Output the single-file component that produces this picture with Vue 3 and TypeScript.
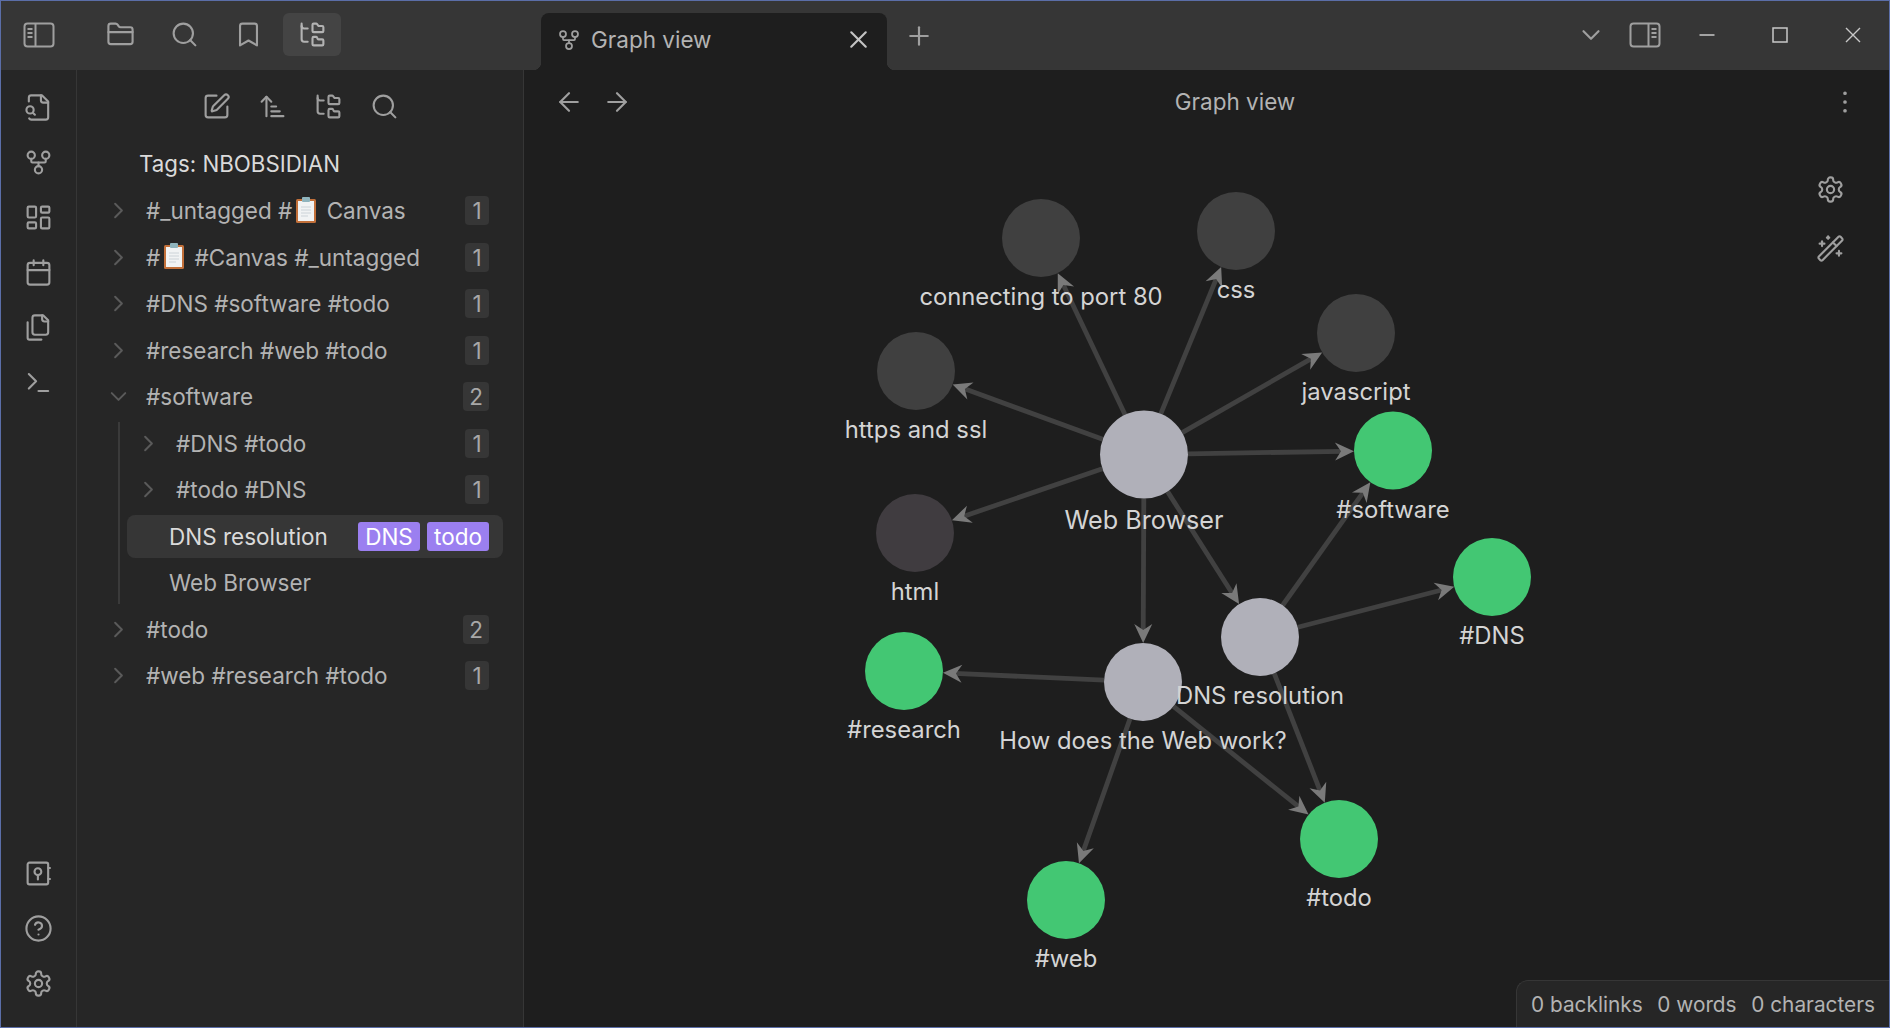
<script setup lang="ts">
import { h } from "vue";

// helpers so circles and rects can live in the same path list as everything else
const c = (cx: number, cy: number, r: number) =>
  `M${cx - r} ${cy}a${r} ${r} 0 1 0 ${2 * r} 0a${r} ${r} 0 1 0 ${-2 * r} 0`;
const rr = (x: number, y: number, w: number, ht: number, r: number) =>
  `M${x + r} ${y}h${w - 2 * r}a${r} ${r} 0 0 1 ${r} ${r}v${ht - 2 * r}a${r} ${r} 0 0 1 ${-r} ${r}h${-(w - 2 * r)}a${r} ${r} 0 0 1 ${-r} ${-r}v${-(ht - 2 * r)}a${r} ${r} 0 0 1 ${r} ${-r}z`;

const icons: Record<string, string[]> = {
  folder: [
    "M20 20a2 2 0 0 0 2-2V8a2 2 0 0 0-2-2h-7.9a2 2 0 0 1-1.69-.9L9.6 3.9A2 2 0 0 0 7.93 3H4a2 2 0 0 0-2 2v13a2 2 0 0 0 2 2Z",
    "M2 10h20",
  ],
  search: [c(11, 11, 8), "M21 21l-4.35-4.35"],
  bookmark: ["m19 21-7-4-7 4V5a2 2 0 0 1 2-2h10a2 2 0 0 1 2 2v16z"],
  tree: [
    "M20 10a1 1 0 0 0 1-1V6a1 1 0 0 0-1-1h-2.5a1 1 0 0 1-.8-.4l-.9-1.2A1 1 0 0 0 15 3h-2a1 1 0 0 0-1 1v5a1 1 0 0 0 1 1Z",
    "M20 21a1 1 0 0 0 1-1v-3a1 1 0 0 0-1-1h-2.9a1 1 0 0 1-.88-.55l-.42-.85a1 1 0 0 0-.92-.6H13a1 1 0 0 0-1 1v5a1 1 0 0 0 1 1Z",
    "M3 5a2 2 0 0 0 2 2h3",
    "M3 3v13a2 2 0 0 0 2 2h3",
  ],
  edit: [
    "M12 3H5a2 2 0 0 0-2 2v14a2 2 0 0 0 2 2h14a2 2 0 0 0 2-2v-7",
    "M18.375 2.625a1 1 0 0 1 3 3l-9.013 9.014a2 2 0 0 1-.853.505l-2.873.84a.5.5 0 0 1-.62-.62l.84-2.873a2 2 0 0 1 .506-.852z",
  ],
  sort: ["m3 8 4-4 4 4", "M7 4v16", "M11 12h4", "M11 16h7", "M11 20h10"],
  fileSearch: [
    "M14 2v4a2 2 0 0 0 2 2h4",
    "M4.268 21a2 2 0 0 0 1.727 1H18a2 2 0 0 0 2-2V7l-5-5H6a2 2 0 0 0-2 2v3",
    "m9 18-1.5-1.5",
    c(5, 14, 3),
  ],
  fork: [
    c(12, 18, 3),
    c(6, 6, 3),
    c(18, 6, 3),
    "M18 9v2c0 .6-.4 1-1 1H7c-.6 0-1-.4-1-1V9",
    "M12 12v3",
  ],
  dashboard: [rr(3, 3, 7, 9, 1), rr(14, 3, 7, 5, 1), rr(14, 12, 7, 9, 1), rr(3, 16, 7, 5, 1)],
  calendar: ["M8 2v4", "M16 2v4", rr(3, 4, 18, 18, 2), "M3 10h18"],
  files: [
    "M20 7h-3a2 2 0 0 1-2-2V2",
    "M9 18a2 2 0 0 1-2-2V4a2 2 0 0 1 2-2h7l4 4v10a2 2 0 0 1-2 2Z",
    "M3 7.6v12.8A1.6 1.6 0 0 0 4.6 22h9.8",
  ],
  terminal: ["m4 17 6-6-6-6", "M12 19h8"],
  vault: [rr(3, 3, 17, 18, 1.5), c(11.5, 10.5, 2.8), "M11.5 13.3v3.7", "M20 7.5h1.5", "M20 16.5h1.5"],
  help: [c(12, 12, 10), "M9.09 9a3 3 0 0 1 5.83 1c0 2-3 3-3 3", "M12 17h.01"],
  gear: [
    "M12.22 2h-.44a2 2 0 0 0-2 2v.18a2 2 0 0 1-1 1.73l-.43.25a2 2 0 0 1-2 0l-.15-.08a2 2 0 0 0-2.73.73l-.22.38a2 2 0 0 0 .73 2.73l.15.1a2 2 0 0 1 1 1.72v.51a2 2 0 0 1-1 1.74l-.15.09a2 2 0 0 0-.73 2.73l.22.38a2 2 0 0 0 2.73.73l.15-.08a2 2 0 0 1 2 0l.43.25a2 2 0 0 1 1 1.73V20a2 2 0 0 0 2 2h.44a2 2 0 0 0 2-2v-.18a2 2 0 0 1 1-1.73l.43-.25a2 2 0 0 1 2 0l.15.08a2 2 0 0 0 2.73-.73l.22-.39a2 2 0 0 0-.73-2.73l-.15-.08a2 2 0 0 1-1-1.74v-.5a2 2 0 0 1 1-1.74l.15-.09a2 2 0 0 0 .73-2.73l-.22-.38a2 2 0 0 0-2.73-.73l-.15.08a2 2 0 0 1-2 0l-.43-.25a2 2 0 0 1-1-1.73V4a2 2 0 0 0-2-2z",
    c(12, 12, 3),
  ],
  wand: [
    "m21.64 3.64-1.28-1.28a1.21 1.21 0 0 0-1.72 0L2.36 18.64a1.21 1.21 0 0 0 0 1.72l1.28 1.28a1.2 1.2 0 0 0 1.72 0L21.64 5.36a1.2 1.2 0 0 0 0-1.72",
    "m14 7 3 3",
    "M5 6v4",
    "M19 14v4",
    "M10 2v2",
    "M7 8H3",
    "M21 16h-4",
    "M11 3H9",
  ],
  chevronRight: ["m9 18 6-6-6-6"],
  chevronDown: ["m6 9 6 6 6-6"],
  x: ["M18 6 6 18", "m6 6 12 12"],
  plus: ["M5 12h14", "M12 5v14"],
  arrowLeft: ["m12 19-7-7 7-7", "M19 12H5"],
  arrowRight: ["M5 12h14", "m12 5 7 7-7 7"],
  more: [c(12, 5, 0.6), c(12, 12, 0.6), c(12, 19, 0.6)],
};

const Icon = (props: { name: string; size?: number }) => {
  const s = props.size ?? 29;
  return h(
    "svg",
    {
      width: s,
      height: s,
      viewBox: "0 0 24 24",
      fill: "none",
      stroke: "currentColor",
      "stroke-width": 1.75,
      "stroke-linecap": "round",
      "stroke-linejoin": "round",
    },
    icons[props.name].map((d) => h("path", { d }))
  );
};
Icon.props = ["name", "size"];

const ribbonTop = ["fileSearch", "fork", "dashboard", "calendar", "files", "terminal"];
const ribbonBottom = ["vault", "help", "gear"];
const tabButtons = ["folder", "search", "bookmark", "tree"];
const navButtons = ["edit", "sort", "tree", "search"];

const afterTree = [
  { label: "#todo", count: 2 },
  { label: "#web #research #todo", count: 1 },
];
const beforeTree = [
  { label: "#DNS #software #todo", count: 1 },
  { label: "#research #web #todo", count: 1 },
];

// graph canvas, in window coordinates
type GNode = { id: string; x: number; y: number; r: number; fill: string };
const gray = "#b0b0b9";
const dim = "#404040";
const green = "#43c773";
const nodes: GNode[] = [
  { id: "connecting to port 80", x: 1041, y: 238, r: 39, fill: dim },
  { id: "css", x: 1236, y: 231, r: 39, fill: dim },
  { id: "javascript", x: 1356, y: 333, r: 39, fill: dim },
  { id: "https and ssl", x: 916, y: 371, r: 39, fill: dim },
  { id: "Web Browser", x: 1144, y: 454.5, r: 44, fill: gray },
  { id: "#software", x: 1393, y: 450.5, r: 39, fill: green },
  { id: "html", x: 915, y: 533, r: 39, fill: "#403c40" },
  { id: "#DNS", x: 1492, y: 577, r: 39, fill: green },
  { id: "DNS resolution", x: 1260, y: 637, r: 39, fill: gray },
  { id: "How does the Web work?", x: 1143, y: 682, r: 39, fill: gray },
  { id: "#research", x: 904, y: 671, r: 39, fill: green },
  { id: "#todo", x: 1339, y: 839, r: 39, fill: green },
  { id: "#web", x: 1066, y: 900, r: 39, fill: green },
];
const byId = (id: string) => nodes.find((n) => n.id === id) as GNode;
const links: [string, string][] = [
  ["Web Browser", "connecting to port 80"],
  ["Web Browser", "css"],
  ["Web Browser", "javascript"],
  ["Web Browser", "https and ssl"],
  ["Web Browser", "html"],
  ["Web Browser", "#software"],
  ["Web Browser", "DNS resolution"],
  ["Web Browser", "How does the Web work?"],
  ["DNS resolution", "#software"],
  ["DNS resolution", "#DNS"],
  ["DNS resolution", "#todo"],
  ["How does the Web work?", "#research"],
  ["How does the Web work?", "#web"],
  ["How does the Web work?", "#todo"],
];
const edges = links.map(([from, to]) => {
  const a = byId(from);
  const b = byId(to);
  const len = Math.hypot(b.x - a.x, b.y - a.y);
  const ux = (b.x - a.x) / len;
  const uy = (b.y - a.y) / len;
  const tipX = b.x - ux * b.r;
  const tipY = b.y - uy * b.r;
  const at = (back: number, side: number) =>
    `${tipX - ux * back - uy * side},${tipY - uy * back + ux * side}`;
  return {
    key: from + to,
    x1: a.x + ux * a.r,
    y1: a.y + uy * a.r,
    x2: tipX - ux * 12,
    y2: tipY - uy * 12,
    head: [at(0, 0), at(19, 9), at(13, 0), at(19, -9)].join(" "),
  };
});
</script>

<template>
  <div class="window">
    <header class="titlebar">
      <div class="tb-left">
        <button class="tb-btn toggle">
          <svg width="32" height="26" viewBox="0 0 32 26" fill="none" stroke="currentColor" stroke-width="2">
            <rect x="1.5" y="1.5" width="29" height="23" rx="3" />
            <path d="M12.5 2v22" />
            <path d="M4.5 7h5M4.5 11h5M4.5 15h5" />
          </svg>
        </button>
        <button v-for="b in tabButtons" :key="b" class="tb-btn" :class="{ active: b === 'tree' }">
          <Icon :name="b" />
        </button>
      </div>
      <div class="tab">
        <Icon name="fork" :size="24" />
        <span class="tab-title">Graph view</span>
        <span class="tab-close"><Icon name="x" :size="29" /></span>
      </div>
      <button class="new-tab"><Icon name="plus" :size="30" /></button>
      <div class="tb-right">
        <button class="ctl list"><Icon name="chevronDown" :size="30" /></button>
        <button class="ctl side">
          <svg width="32" height="26" viewBox="0 0 32 26" fill="none" stroke="currentColor" stroke-width="2">
            <rect x="1.5" y="1.5" width="29" height="23" rx="3" />
            <path d="M19.5 2v22" />
            <path d="M22.5 7h5M22.5 11h5M22.5 15h5" />
          </svg>
        </button>
        <button class="ctl win">
          <svg width="16" height="16" viewBox="0 0 16 16" fill="none" stroke="currentColor" stroke-width="1.5"><path d="M0.5 8h15" /></svg>
        </button>
        <button class="ctl win">
          <svg width="16" height="16" viewBox="0 0 16 16" fill="none" stroke="currentColor" stroke-width="1.5"><rect x="1" y="1" width="14" height="14" /></svg>
        </button>
        <button class="ctl win">
          <svg width="16" height="16" viewBox="0 0 16 16" fill="none" stroke="currentColor" stroke-width="1.4"><path d="M1 1l14 14M15 1L1 15" /></svg>
        </button>
      </div>
    </header>

    <div class="body">
      <aside class="ribbon">
        <div class="ribbon-group">
          <span v-for="r in ribbonTop" :key="r" class="ribbon-icon"><Icon :name="r" /></span>
        </div>
        <div class="ribbon-group">
          <span v-for="r in ribbonBottom" :key="r" class="ribbon-icon"><Icon :name="r" /></span>
        </div>
      </aside>

      <aside class="sidebar">
        <nav class="side-nav">
          <button v-for="n in navButtons" :key="n" class="nav-btn"><Icon :name="n" /></button>
        </nav>
        <div class="pane-title">Tags: NBOBSIDIAN</div>
        <div class="tree">
          <div class="row">
            <span class="chev"><Icon name="chevronRight" :size="27" /></span>
            <span class="label">#_untagged #<svg class="clip" width="22" height="26" viewBox="0 0 22 26">
                <rect x="1" y="2" width="20" height="24" rx="1.5" fill="#c2703a" />
                <rect x="3" y="4" width="16" height="20" fill="#f1f3f4" />
                <path d="M6 10h10M6 13h10M6 16h10M6 19h7" stroke="#ccd3d8" stroke-width="1" />
                <rect x="7" y="0" width="8" height="5" rx="1" fill="#8fb4bd" />
              </svg> Canvas</span>
            <span class="count">1</span>
          </div>
          <div class="row">
            <span class="chev"><Icon name="chevronRight" :size="27" /></span>
            <span class="label">#<svg class="clip" width="22" height="26" viewBox="0 0 22 26">
                <rect x="1" y="2" width="20" height="24" rx="1.5" fill="#c2703a" />
                <rect x="3" y="4" width="16" height="20" fill="#f1f3f4" />
                <path d="M6 10h10M6 13h10M6 16h10M6 19h7" stroke="#ccd3d8" stroke-width="1" />
                <rect x="7" y="0" width="8" height="5" rx="1" fill="#8fb4bd" />
              </svg> #Canvas #_untagged</span>
            <span class="count">1</span>
          </div>
          <div v-for="t in beforeTree" :key="t.label" class="row">
            <span class="chev"><Icon name="chevronRight" :size="27" /></span>
            <span class="label">{{ t.label }}</span>
            <span class="count">{{ t.count }}</span>
          </div>
          <div class="row">
            <span class="chev"><Icon name="chevronDown" :size="27" /></span>
            <span class="label">#software</span>
            <span class="count">2</span>
          </div>
          <div class="children">
            <div class="row nested">
              <span class="chev"><Icon name="chevronRight" :size="27" /></span>
              <span class="label">#DNS #todo</span>
              <span class="count">1</span>
            </div>
            <div class="row nested">
              <span class="chev"><Icon name="chevronRight" :size="27" /></span>
              <span class="label">#todo #DNS</span>
              <span class="count">1</span>
            </div>
            <div class="row leaf selected">
              <span class="label">DNS resolution</span>
              <span class="tags"><span class="tag">DNS</span><span class="tag">todo</span></span>
            </div>
            <div class="row leaf">
              <span class="label">Web Browser</span>
            </div>
          </div>
          <div v-for="t in afterTree" :key="t.label" class="row">
            <span class="chev"><Icon name="chevronRight" :size="27" /></span>
            <span class="label">{{ t.label }}</span>
            <span class="count">{{ t.count }}</span>
          </div>
        </div>
      </aside>

      <main class="main">
        <svg class="graph" viewBox="524 70 1365 957">
          <g v-for="e in edges" :key="e.key">
            <line :x1="e.x1" :y1="e.y1" :x2="e.x2" :y2="e.y2" stroke="#414141" stroke-width="4.8" />
            <polygon :points="e.head" fill="#7a7a7a" />
          </g>
          <g v-for="n in nodes" :key="n.id">
            <circle :cx="n.x" :cy="n.y" :r="n.r" :fill="n.fill" />
          </g>
          <text
            v-for="n in nodes"
            :key="n.id + '-label'"
            :x="n.x"
            :y="n.y + n.r + (n.r > 40 ? 30 : 28)"
            text-anchor="middle"
            class="node-label"
            :class="{ big: n.r > 40 }"
          >{{ n.id }}</text>
        </svg>
        <div class="view-header">
          <div class="view-nav">
            <button class="view-btn"><Icon name="arrowLeft" :size="30" /></button>
            <button class="view-btn"><Icon name="arrowRight" :size="30" /></button>
          </div>
          <div class="view-title">Graph view</div>
          <button class="view-btn more"><Icon name="more" :size="30" /></button>
        </div>
        <div class="graph-controls">
          <Icon name="gear" />
          <Icon name="wand" />
        </div>
        <footer class="status">
          <span>0 backlinks</span>
          <span>0 words</span>
          <span>0 characters</span>
        </footer>
      </main>
    </div>
  </div>
</template>

<style scoped>
.window {
  width: 100%;
  height: 100vh;
  box-sizing: border-box;
  border: 1px solid #5b6ea8;
  display: flex;
  flex-direction: column;
  font-family: Inter, sans-serif;
  font-size: 22.5px;
  color: #b3b3b3;
  background: #1e1e1e;
  overflow: hidden;
}
button {
  border: 0;
  background: none;
  padding: 0;
  color: inherit;
  font: inherit;
  display: flex;
  align-items: center;
  justify-content: center;
}
svg {
  display: block;
  flex: none;
}
.titlebar {
  height: 69px;
  flex: none;
  display: flex;
  background: #363636;
  color: #9f9f9f;
}
.tb-left {
  width: 522px;
  flex: none;
  display: flex;
  gap: 6px;
  padding: 12px 0 0 9px;
  box-sizing: border-box;
}
.tb-btn {
  width: 58px;
  height: 43px;
  border-radius: 6px;
}
.tb-btn.toggle {
  margin-right: 17px;
}
.tb-btn.active {
  background: #444444;
  color: #b3b3b3;
}
.tab {
  position: relative;
  width: 346px;
  height: 57px;
  margin: 12px 0 0 18px;
  box-sizing: border-box;
  padding: 0 14px 4px 16px;
  display: flex;
  align-items: center;
  background: #1e1e1e;
  border-radius: 8px 8px 0 0;
}
.tab::before,
.tab::after {
  content: "";
  position: absolute;
  bottom: 0;
  width: 8px;
  height: 8px;
}
.tab::before {
  left: -8px;
  background: radial-gradient(circle at 0 0, transparent 8px, #1e1e1e 8.5px);
}
.tab::after {
  right: -8px;
  background: radial-gradient(circle at 100% 0, transparent 8px, #1e1e1e 8.5px);
}
.tab-title {
  margin-left: 10px;
  flex: 1;
  color: #b3b3b3;
}
.tab-close {
  color: #c4c4c4;
}
.new-tab {
  width: 44px;
  height: 44px;
  margin: 13px 0 0 10px;
}
.tb-right {
  margin-left: auto;
  display: flex;
  height: 68px;
}
.ctl {
  height: 68px;
  padding-bottom: 0;
}
.ctl.list {
  width: 58px;
}
.ctl.side {
  width: 50px;
}
.ctl.win {
  width: 73px;
  color: #c8c8c8;
}
.body {
  flex: 1;
  min-height: 0;
  display: flex;
}
.ribbon {
  width: 76px;
  flex: none;
  box-sizing: border-box;
  border-right: 1px solid #363636;
  background: #262626;
  color: #9f9f9f;
  display: flex;
  flex-direction: column;
  justify-content: space-between;
  padding: 9.5px 0 16px;
}
.ribbon-group {
  display: flex;
  flex-direction: column;
}
.ribbon-icon {
  height: 55px;
  display: flex;
  align-items: center;
  justify-content: center;
}
.sidebar {
  width: 447px;
  flex: none;
  box-sizing: border-box;
  border-right: 1px solid #363636;
  background: #262626;
  display: flex;
  flex-direction: column;
}
.side-nav {
  height: 73px;
  flex: none;
  display: flex;
  justify-content: center;
  gap: 6px;
  align-items: center;
  color: #9f9f9f;
}
.nav-btn {
  width: 50px;
  height: 40px;
}
.pane-title {
  height: 41px;
  line-height: 42px;
  padding-left: 62px;
  font-size: 22.3px;
  color: #dadada;
}
.tree {
  margin-top: 5px;
  padding: 0 20px 0 26px;
}
.row {
  height: 43px;
  margin-bottom: 3.5px;
  box-sizing: border-box;
  padding-right: 14px;
  display: flex;
  align-items: center;
  white-space: nowrap;
}
.chev {
  width: 30px;
  flex: none;
  display: flex;
  justify-content: center;
  color: #5a5a5a;
  margin-right: 13px;
}
.label {
  flex: 1;
  display: flex;
  align-items: center;
  white-space: pre;
}
.clip {
  margin: 0 3px 2px 3px;
}
.count {
  height: 29px;
  min-width: 24px;
  padding: 0 6px;
  box-sizing: border-box;
  border-radius: 4px;
  background: #363636;
  text-align: center;
  line-height: 29px;
  font-size: 22.5px;
  color: #a8a8a8;
}
.children {
  margin-left: 15px;
  padding-left: 7px;
  border-left: 2px solid #3a3a3a;
  margin-bottom: 3.5px;
}
.children .row:last-child {
  margin-bottom: 0;
}
.row.nested {
  padding-left: 6px;
}
.row.leaf {
  padding-left: 42px;
}
.row.selected {
  background: #363636;
  border-radius: 8px;
  color: #dadada;
}
.tags {
  display: flex;
  gap: 7px;
}
.tag {
  height: 29px;
  width: 62px;
  text-align: center;
  line-height: 29px;
  border-radius: 3px;
  background: #9b7ff0;
  color: #ffffff;
}
.main {
  position: relative;
  flex: 1;
  min-width: 0;
  background: #1e1e1e;
}
.graph {
  position: absolute;
  inset: 0;
  width: 100%;
  height: 100%;
}
.node-label {
  font-size: 23.8px;
  fill: #d4d4d4;
}
.node-label.big {
  font-size: 25.2px;
}
.view-header {
  position: relative;
  height: 63px;
  display: flex;
  align-items: center;
  padding: 0 24px 0 25px;
  color: #9f9f9f;
}
.view-nav {
  display: flex;
  gap: 8px;
}
.view-btn {
  width: 40px;
  height: 40px;
}
.view-title {
  flex: 1;
  text-align: center;
  color: #b3b3b3;
  padding-left: 8px;
}
.graph-controls {
  position: absolute;
  top: 105px;
  right: 44px;
  display: flex;
  flex-direction: column;
  gap: 30px;
  color: #9f9f9f;
}
.status {
  position: absolute;
  right: 0;
  bottom: 0;
  height: 47px;
  width: 373px;
  box-sizing: border-box;
  padding: 0 14px;
  display: flex;
  align-items: center;
  justify-content: space-between;
  background: #262626;
  border: 1px solid #363636;
  border-width: 1px 0 0 1px;
  border-top-left-radius: 12px;
  font-size: 20.8px;
  color: #b3b3b3;
}
</style>

<style>
html,
body {
  margin: 0;
  background: #1e1e1e;
}
</style>
